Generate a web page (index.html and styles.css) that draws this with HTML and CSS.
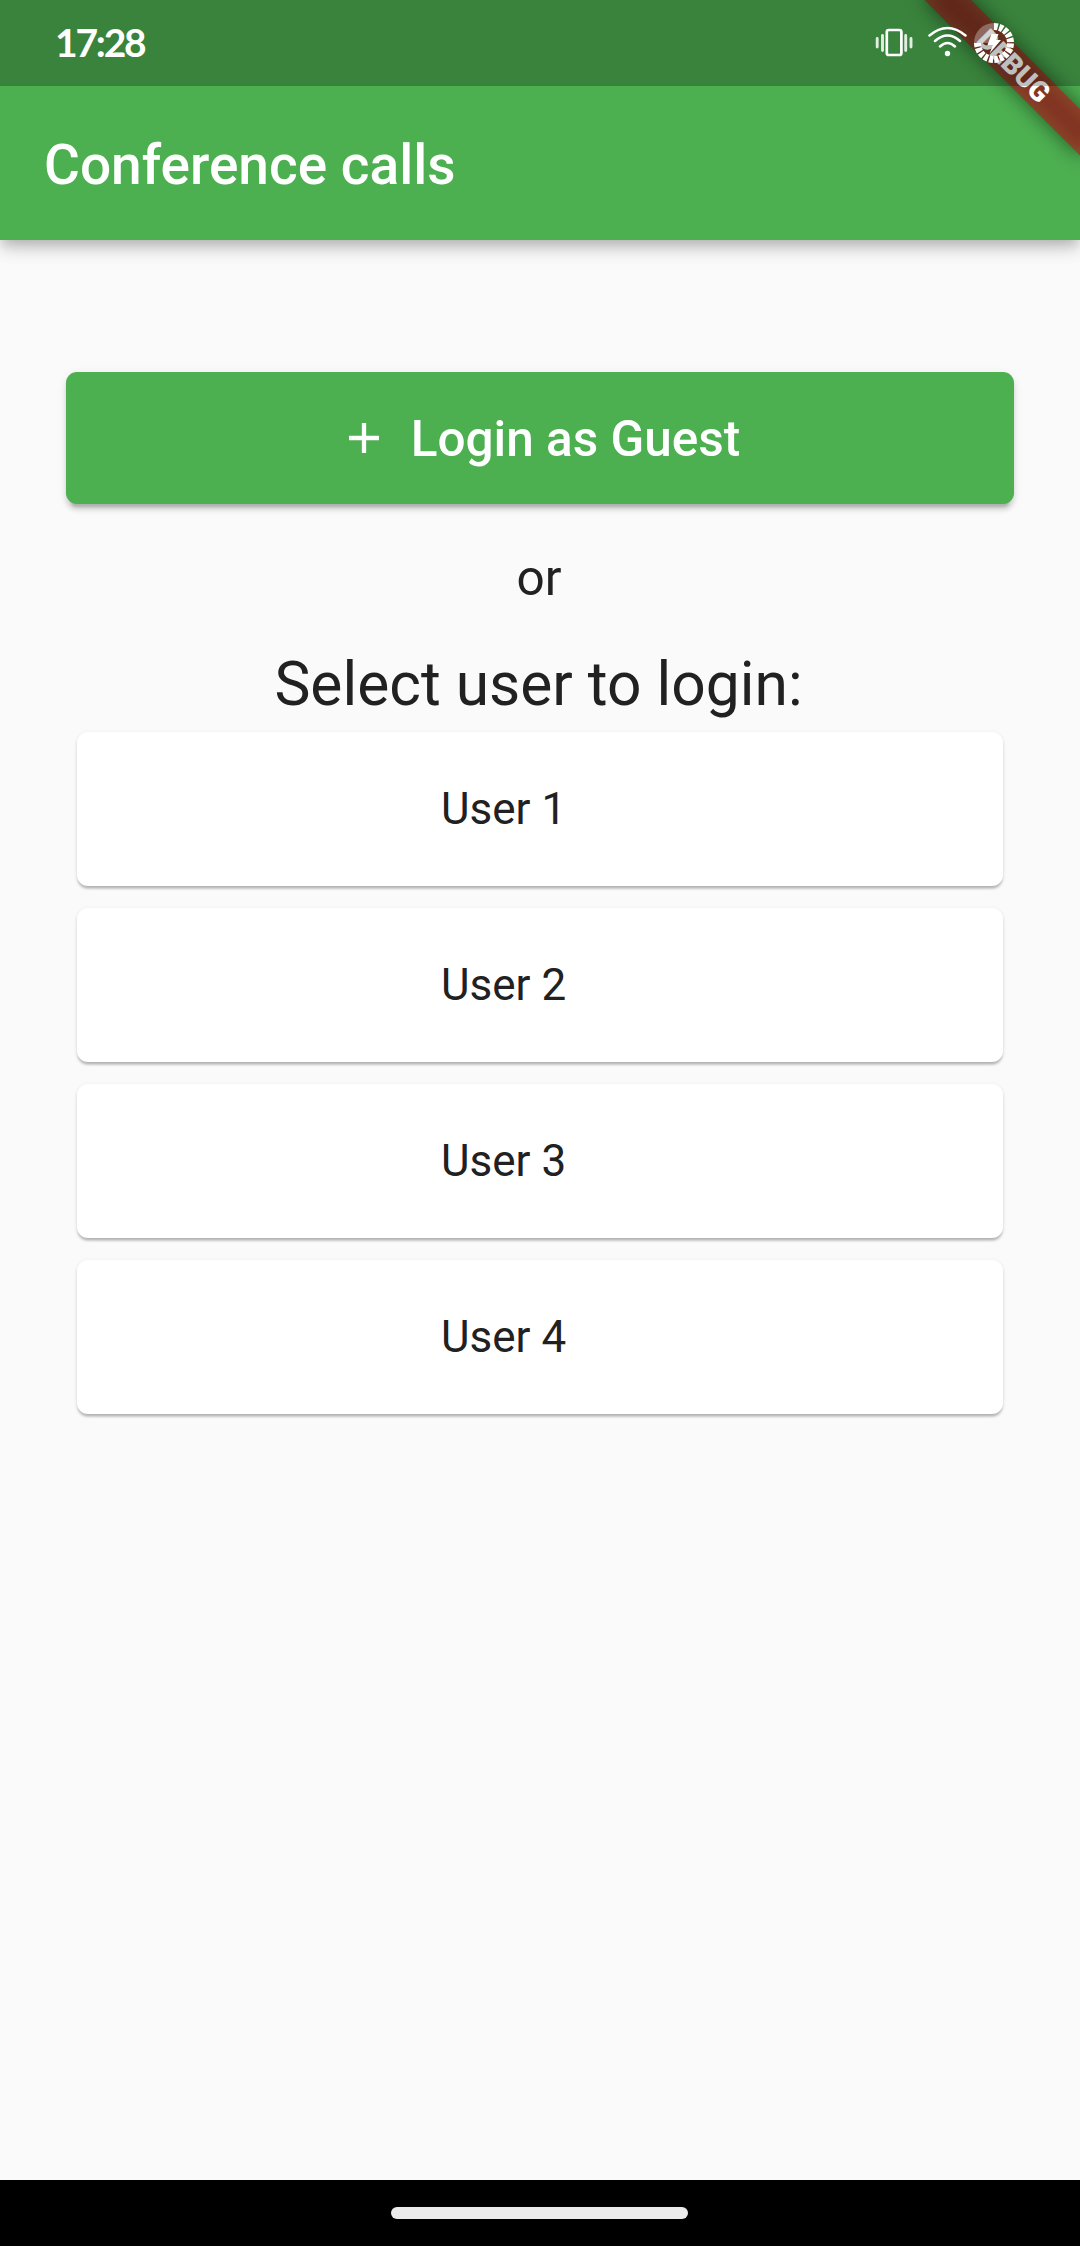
FILE: index.html
```html
<!DOCTYPE html>
<html lang="en">
<head>
<meta charset="utf-8">
<title>Conference calls</title>
<link rel="stylesheet" href="styles.css">
</head>
<body>
<div class="screen">
  <header class="app-header">
    <div class="status-bar">
      <span class="clock">17:28</span>
      <svg class="status-icons" width="160" height="46" viewBox="870 20 160 46" fill="none" stroke="#fff">
        <rect x="886.800" y="30" width="14.600" height="25" rx="2" stroke-width="2.700"/>
        <path d="M877.200 38.500v8.500M882.500 35.500v15M905.700 35.500v15M911 38.500v8.500" stroke-width="2.900" stroke-linecap="round" opacity=".85"/>
        <path d="M929.500 35.500Q947.500 20.500 965.500 35.500M935 41Q947.500 30 960 41M940 46.500Q947.500 39.500 955 46.500" stroke-width="2.500" stroke-linecap="round"/>
        <circle cx="947.500" cy="53.500" r="2.700" fill="#fff" stroke="none"/>
        <path d="M994 43V23A20 20 0 0 0 974 43Z" fill="#fff" fill-opacity=".3" stroke="none"/>
        <path d="M994 26.500A16.500 16.500 0 1 1 977.500 43" stroke-width="7" stroke-dasharray="3.900 1.350"/>
        <path d="M998.500 34h-7l-4 11h5.500l-3.500 8.500 11.500-13.500h-5z" fill="#fff" stroke="none"/>
      </svg>
    </div>
    <h1 class="title">Conference calls</h1>
  </header>
  <main class="content">
    <button class="guest">
      <svg width="30" height="30" viewBox="0 0 30 30"><path d="M15 0v30M0 15h30" stroke="#fff" stroke-width="4.300"/></svg>
      <span>Login as Guest</span>
    </button>
    <p class="or">or</p>
    <h2 class="prompt">Select user to login:</h2>
    <ul class="users">
      <li><span>User 1</span></li>
      <li><span>User 2</span></li>
      <li><span>User 3</span></li>
      <li><span>User 4</span></li>
    </ul>
  </main>
  <footer class="nav-bar"><span class="handle"></span></footer>
  <svg class="debug-banner" width="240" height="240" viewBox="840 0 240 240">
    <defs><filter id="shade" filterUnits="userSpaceOnUse" x="-180" y="20" width="360" height="150"><feGaussianBlur stdDeviation="10"/></filter></defs>
    <g transform="translate(1080 0) rotate(45)">
      <rect x="-110" y="77" width="220" height="33" fill="#000" fill-opacity=".5" filter="url(#shade)"/>
      <rect x="-110" y="77" width="220" height="33" fill="#b71c1c" fill-opacity=".627"/>
      <text class="debug-text" x="0" y="103" text-anchor="middle">DEBUG</text>
    </g>
  </svg>
</div>
</body>
</html>
```
FILE: styles.css
```css
* { box-sizing: border-box; margin: 0; padding: 0; }
body { background: #fafafa; color: #212121; font-family: Roboto, sans-serif; }
.screen { position: relative; display: flex; flex-direction: column; width: 1080px; height: 2246px; overflow: hidden; }
.app-header { height: 240px; background: #4caf50; color: #fff; box-shadow: 0 5.5px 11px -2.75px rgba(0,0,0,.17), 0 11px 14px rgba(0,0,0,.1), 0 2.75px 24px rgba(0,0,0,.09); }
.status-bar { position: relative; z-index: 2; display: flex; align-items: center; justify-content: space-between; height: 86px; padding: 0 50px 0 55px; background: rgba(0,0,0,.25); }
.clock { padding-bottom: 2px; font: 700 39px/1 Lato, sans-serif; letter-spacing: -2.2px; }
.title { padding: 2px 44px 0; font-size: 55px; font-weight: 500; line-height: 154px; }
.content { flex: 1; display: flex; flex-direction: column; padding: 132px 66px 0; }
.guest { display: flex; align-items: center; justify-content: center; gap: 32px; height: 132px; padding-left: 9px; border: 0; border-radius: 11px; background: #4caf50; color: #fff; font: 500 49.5px Roboto, sans-serif; box-shadow: 0 8px 3px -5.5px rgba(0,0,0,.16), 0 5.5px 5.5px rgba(0,0,0,.12), 0 2.75px 10px rgba(0,0,0,.08); }
.guest span { padding-top: 1px; }
.or { margin: 45px 2px 0 0; text-align: center; font-size: 49.5px; line-height: 58px; }
.prompt { margin: 42px 3px 0 0; text-align: center; font-size: 60.5px; font-weight: 400; line-height: 71px; }
.users { display: flex; flex-direction: column; gap: 22px; margin: 12px 11px 0; list-style: none; }
.users li { height: 154px; padding-left: 364px; border-radius: 11px; background: #fff; font-size: 44px; line-height: 154px; box-shadow: 0 4.5px 2.75px -2.75px rgba(0,0,0,.16), 0 2.75px 2.75px rgba(0,0,0,.12), 0 1px 5px rgba(0,0,0,.07); }
.nav-bar { display: flex; justify-content: center; height: 66px; padding: 27px 2px 0 0; background: #000; }
.handle { width: 297px; height: 12px; border-radius: 6px; background: #ebebeb; }
.debug-banner { position: absolute; z-index: 1; top: 0; right: 0; }
.debug-text { fill: #fff; font: 900 28px Roboto, sans-serif; }
```
